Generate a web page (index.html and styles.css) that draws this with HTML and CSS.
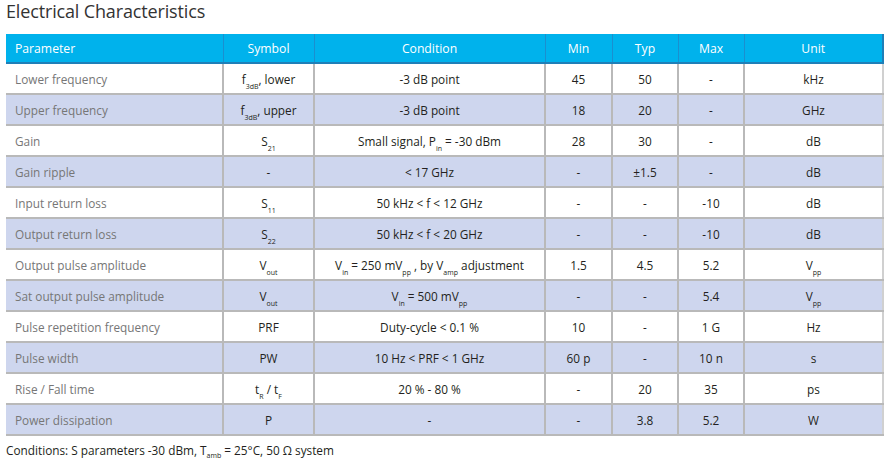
FILE: index.html
```html
<!DOCTYPE html>
<html>
<head>
<meta charset="utf-8">
<link rel="stylesheet" href="styles.css">
</head>
<body>
<h1 class="title">Electrical Characteristics</h1>
<table class="spec">
  <colgroup>
    <col class="c-param"><col class="c-sym"><col class="c-cond"><col class="c-min"><col class="c-typ"><col class="c-max"><col class="c-unit">
  </colgroup>
  <thead>
    <tr><th class="left">Parameter</th><th>Symbol</th><th>Condition</th><th>Min</th><th>Typ</th><th>Max</th><th>Unit</th></tr>
  </thead>
  <tbody>
    <tr><td class="param">Lower frequency</td><td>f<sub>3dB</sub>, lower</td><td>-3 dB point</td><td>45</td><td>50</td><td>-</td><td>kHz</td></tr>
    <tr class="alt"><td class="param">Upper frequency</td><td>f<sub>3dB</sub>, upper</td><td>-3 dB point</td><td>18</td><td>20</td><td>-</td><td>GHz</td></tr>
    <tr><td class="param">Gain</td><td>S<sub>21</sub></td><td>Small signal, P<sub>in</sub> = -30 dBm</td><td>28</td><td>30</td><td>-</td><td>dB</td></tr>
    <tr class="alt"><td class="param">Gain ripple</td><td>-</td><td>&lt; 17 GHz</td><td>-</td><td>±1.5</td><td>-</td><td>dB</td></tr>
    <tr><td class="param">Input return loss</td><td>S<sub>11</sub></td><td>50 kHz &lt; f &lt; 12 GHz</td><td>-</td><td>-</td><td>-10</td><td>dB</td></tr>
    <tr class="alt"><td class="param">Output return loss</td><td>S<sub>22</sub></td><td>50 kHz &lt; f &lt; 20 GHz</td><td>-</td><td>-</td><td>-10</td><td>dB</td></tr>
    <tr><td class="param">Output pulse amplitude</td><td>V<sub>out</sub></td><td>V<sub>in</sub> = 250 mV<sub>pp</sub> , by V<sub>amp</sub> adjustment</td><td>1.5</td><td>4.5</td><td>5.2</td><td>V<sub>pp</sub></td></tr>
    <tr class="alt"><td class="param">Sat output pulse amplitude</td><td>V<sub>out</sub></td><td>V<sub>in</sub> = 500 mV<sub>pp</sub></td><td>-</td><td>-</td><td>5.4</td><td>V<sub>pp</sub></td></tr>
    <tr><td class="param">Pulse repetition frequency</td><td>PRF</td><td>Duty-cycle &lt; 0.1 %</td><td>10</td><td>-</td><td>1 G</td><td>Hz</td></tr>
    <tr class="alt"><td class="param">Pulse width</td><td>PW</td><td>10 Hz &lt; PRF &lt; 1 GHz</td><td>60 p</td><td>-</td><td>10 n</td><td>s</td></tr>
    <tr><td class="param">Rise / Fall time</td><td>t<sub>R</sub> / t<sub>F</sub></td><td>20 % - 80 %</td><td>-</td><td>20</td><td>35</td><td>ps</td></tr>
    <tr class="alt"><td class="param">Power dissipation</td><td>P</td><td>-</td><td>-</td><td>3.8</td><td>5.2</td><td>W</td></tr>
  </tbody>
</table>
<p class="note">Conditions: S parameters -30 dBm, T<sub>amb</sub> = 25°C, 50 Ω system</p>
</body>
</html>
```

FILE: styles.css
```css
html, body {
  margin: 0;
  padding: 0;
  background: #ffffff;
}
body {
  font-family: "Open Sans", "Noto Sans", sans-serif;
  color: #231f20;
}
.title {
  margin: 0 0 0 6px;
  height: 34px;
  line-height: 23px;
  font-size: 18px;
  font-weight: 400;
  color: #333333;
  letter-spacing: -0.15px;
}
.spec {
  margin-left: 6px;
  width: 877px;
  table-layout: fixed;
  border-collapse: collapse;
  font-size: 11.8px;
}
.c-param { width: 217px; }
.c-sym { width: 91px; }
.c-cond { width: 231px; }
.c-min { width: 67px; }
.c-typ { width: 66px; }
.c-max { width: 66px; }
.c-unit { width: 139px; }

.spec th {
  background: #00b2ec;
  color: #ffffff;
  font-weight: 400;
  font-size: 12.2px;
  height: 28px;
  padding: 0;
  text-align: center;
  border-left: 1px solid #1a8fcf;
  border-bottom: 2px solid #1f7fb8;
}
.spec th:last-child {
  border-right: 2px solid #1f7fb8;
}
.spec th.left {
  text-align: left;
  padding-left: 9px;
  border-left: none;
}
.spec td {
  height: 29px;
  padding: 0;
  text-align: center;
  color: #231f20;
  border: 2px solid #b9b9b9;
  border-top: none;
  white-space: nowrap;
}
.spec td:first-child { border-left: none; }
.spec td:last-child { border-right: 2px solid #d0d0d0; }
.spec td.param {
  text-align: left;
  padding-left: 9px;
  color: #767676;
}
.spec tr.alt td {
  background: #ced6ee;
}
sub {
  font-size: 7px;
  vertical-align: -5px;
  line-height: 0;
}
.note {
  margin: 6px 0 0 6px;
  font-size: 11.8px;
  line-height: 16px;
  color: #231f20;
}
.note sub {
  vertical-align: -3px;
}
```
